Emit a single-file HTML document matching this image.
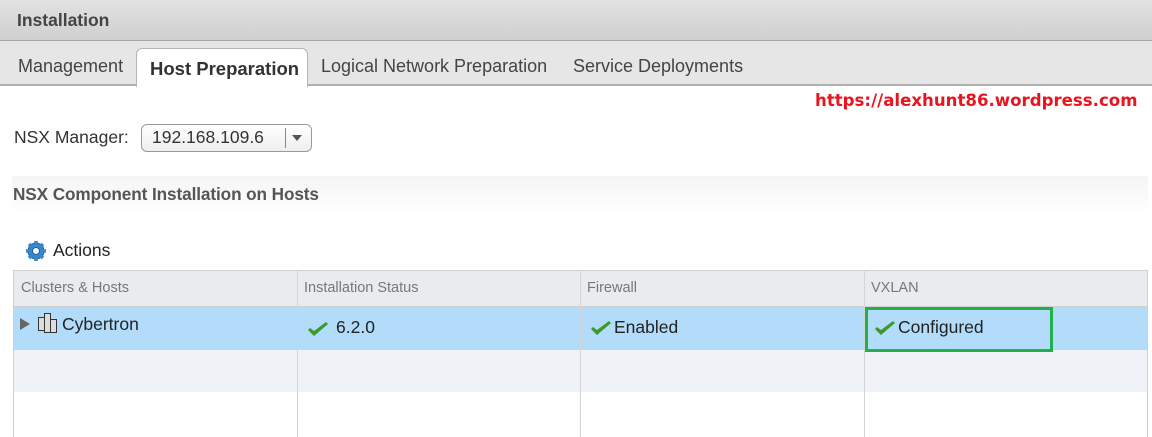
<!DOCTYPE html>
<html><head><style>
*{margin:0;padding:0;box-sizing:border-box}
body{width:1152px;height:437px;overflow:hidden;background:#fff;font-family:"Liberation Sans",Arial,sans-serif;position:relative;color:#333}
.a{position:absolute}
.title{left:0;top:0;width:1152px;height:41px;background:linear-gradient(#e2e2e2,#cfcfcf);border-bottom:1px solid #a8a8a8}
.tabs{left:0;top:41px;width:1152px;height:45px;background:#e6e6e6;border-bottom:2px solid #b0b0b0}
.tab{top:47px;font-size:18px;color:#444}
.sel{left:136px;top:48px;width:172px;height:39px;background:#fff;border:1px solid #b5b5b5;border-bottom:none;border-radius:6px 6px 0 0}
.chk{width:20px;height:14px}
.td{font-size:17.5px;color:#222}
.th{font-size:14.5px;color:#777;top:280px}
</style></head><body>
<div class="a title"></div>
<div class="a" style="left:17px;top:10px;font-size:17.5px;font-weight:bold;color:#444">Installation</div>
<div class="a tabs"></div>
<div class="a sel"></div>
<div class="a tab" style="left:18px;top:56px">Management</div>
<div class="a tab" style="left:150px;top:58px;font-weight:bold;color:#333;font-size:18.5px">Host Preparation</div>
<div class="a tab" style="left:321px;top:56px">Logical Network Preparation</div>
<div class="a tab" style="left:573px;top:56px">Service Deployments</div>
<div class="a" style="left:815px;top:91px;font-family:'DejaVu Sans',sans-serif;font-weight:bold;font-size:16.6px;color:#e8141e">https://alexhunt86.wordpress.com</div>
<div class="a" style="left:14px;top:127px;font-size:17.5px;color:#333">NSX Manager:</div>
<div class="a" style="left:141px;top:124px;width:171px;height:28px;border:1px solid #999;border-radius:6px;background:linear-gradient(#fff,#eee)"></div>
<div class="a" style="left:152px;top:127px;font-size:17.5px;color:#333">192.168.109.6</div>
<div class="a" style="left:285px;top:128px;width:1px;height:20px;background:#888"></div>
<div class="a" style="left:292px;top:135px;width:0;height:0;border-left:5px solid transparent;border-right:5px solid transparent;border-top:6px solid #555"></div>
<div class="a" style="left:12px;top:176px;width:1136px;height:40px;background:linear-gradient(#f5f5f5,#fff)"></div>
<div class="a" style="left:13px;top:184px;font-size:17.2px;font-weight:bold;color:#555;letter-spacing:-0.1px">NSX Component Installation on Hosts</div>
<svg class="a" style="left:24px;top:239px" width="24" height="24" viewBox="0 0 24 24"><g fill="#3a85d0" stroke="#1f5fa5" stroke-width="1"><circle cx="12" cy="12" r="8"/><g stroke-width="3.5" stroke="#3a85d0"><path d="M12 2v20M2 12h20M5 5l14 14M19 5L5 19"/></g></g><circle cx="12" cy="12" r="3.5" fill="#fff" stroke="#1f5fa5"/></svg>
<div class="a" style="left:53px;top:240px;font-size:17.5px;color:#222">Actions</div>
<div class="a" style="left:13px;top:270px;width:1135px;height:167px;border:1px solid #d0d0d0;border-bottom:none">
 <div class="a" style="left:0;top:0;width:1133px;height:36px;background:#e9ecef;border-bottom:1px solid #d0d0d0"></div>
 <div class="a" style="left:0;top:36px;width:1133px;height:43px;background:#b3dcfb"></div>
 <div class="a" style="left:0;top:79px;width:1133px;height:42px;background:#eff3f8"></div>
</div>
<div class="a" style="left:297px;top:270px;width:1px;height:167px;background:#d4d4d4"></div>
<div class="a" style="left:580px;top:270px;width:1px;height:167px;background:#d4d4d4"></div>
<div class="a" style="left:864px;top:270px;width:1px;height:167px;background:#d4d4d4"></div>
<div class="a th" style="left:21px">Clusters &amp; Hosts</div>
<div class="a th" style="left:304px">Installation Status</div>
<div class="a th" style="left:587px">Firewall</div>
<div class="a th" style="left:871px">VXLAN</div>
<div class="a" style="left:20px;top:318px;width:0;height:0;border-top:6px solid transparent;border-bottom:6px solid transparent;border-left:10px solid #666"></div>
<svg class="a" style="left:37px;top:312px" width="22" height="22" viewBox="0 0 22 22"><g fill="#ddd" stroke="#333"><rect x="1.5" y="5.5" width="6" height="13"/><rect x="7.5" y="1.5" width="6" height="19"/><rect x="13.5" y="7.5" width="6" height="13"/></g></svg>
<div class="a td" style="left:62px;top:314px">Cybertron</div>
<svg class="a chk" style="left:308px;top:322px" viewBox="0 0 20 14"><path d="M0 8l2-2 4 3L18 0l2 2L6 14z" fill="#3a9a2a"/></svg>
<div class="a td" style="left:336px;top:317px">6.2.0</div>
<svg class="a chk" style="left:591px;top:321px" viewBox="0 0 20 14"><path d="M0 8l2-2 4 3L18 0l2 2L6 14z" fill="#3a9a2a"/></svg>
<div class="a td" style="left:614px;top:317px">Enabled</div>
<div class="a" style="left:865px;top:307px;width:188px;height:45px;border:3px solid #1fb14a"></div>
<svg class="a chk" style="left:875px;top:321px" viewBox="0 0 20 14"><path d="M0 8l2-2 4 3L18 0l2 2L6 14z" fill="#3a9a2a"/></svg>
<div class="a td" style="left:898px;top:317px">Configured</div>
</body></html>
